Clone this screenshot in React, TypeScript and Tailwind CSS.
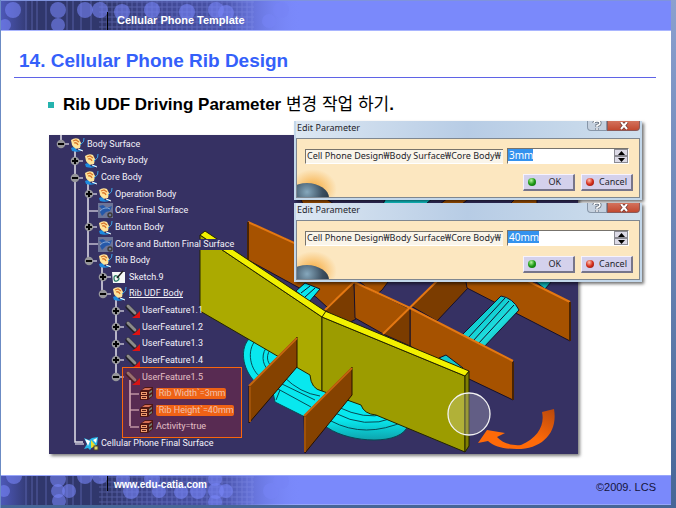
import { type ReactNode } from "react";

interface TreeItem {
  label: string;
  level: number;
  icon: "body" | "surface" | "sketch" | "feature" | "param" | "final";
  toggle?: "plus" | "minus";
  selected?: boolean;
  underline?: boolean;
}

const TREE: TreeItem[] = [
  { label: "Body Surface", level: 0, icon: "body", toggle: "minus" },
  { label: "Cavity Body", level: 1, icon: "body", toggle: "plus" },
  { label: "Core Body", level: 1, icon: "body", toggle: "minus" },
  { label: "Operation Body", level: 2, icon: "body", toggle: "plus" },
  { label: "Core Final Surface", level: 2, icon: "surface" },
  { label: "Button Body", level: 2, icon: "body", toggle: "plus" },
  { label: "Core and Button Final Surface", level: 2, icon: "surface" },
  { label: "Rib Body", level: 2, icon: "body", toggle: "minus" },
  { label: "Sketch.9", level: 3, icon: "sketch", toggle: "plus" },
  { label: "Rib UDF Body", level: 3, icon: "body", toggle: "minus", underline: true },
  { label: "UserFeature1.1", level: 4, icon: "feature", toggle: "plus" },
  { label: "UserFeature1.2", level: 4, icon: "feature", toggle: "plus" },
  { label: "UserFeature1.3", level: 4, icon: "feature", toggle: "plus" },
  { label: "UserFeature1.4", level: 4, icon: "feature", toggle: "plus" },
  { label: "UserFeature1.5", level: 4, icon: "feature", toggle: "minus" },
  { label: "`Rib Width`=3mm", level: 5, icon: "param", selected: true },
  { label: "`Rib Height`=40mm", level: 5, icon: "param", selected: true },
  { label: "Activity=true", level: 5, icon: "param" },
  { label: "Cellular Phone Final Surface", level: 1, icon: "final" },
];

const INDENT = ["pl-[7px]", "pl-[21px]", "pl-[35px]", "pl-[49px]", "pl-[62px]", "pl-[76px]"];

function TreeIcon({ icon }: { icon: TreeItem["icon"] }) {
  return (
    <svg viewBox="0 0 15 15" className="size-[15px] shrink-0">
      {icon === "body" && (
        <>
          <path d="M1 3 Q5 0 9 2 L11 6 10 11 5 12 2 8Z" fill="#ffe49a" />
          <path d="M3 4 L6 3 9 5 M4 6 Q7 5 8 8" stroke="#d9772c" strokeWidth="1.3" fill="none" />
          <path d="M1 11 Q4 9 6 12 Q8 15 10 12 L13 13 Q8 16 2 14Z" fill="#1d8be0" />
          <path d="M8 12 L13 14" stroke="#fff" strokeWidth="1" />
          <path d="M14 1 Q15 5 10 8" stroke="#3aa5e8" strokeWidth="1" fill="none" />
        </>
      )}
      {icon === "surface" && (
        <>
          <rect width="15" height="15" fill="#6d7597" />
          <path d="M1 3 L5 2 9 5 14 3 12 8 8 9 4 13 2 9 4 6Z" fill="#2558a8" />
          <path d="M2 8 Q7 3 12 6" stroke="#84a8d8" fill="none" />
          <circle cx="12" cy="12" r="2" fill="none" stroke="#3c3a36" strokeWidth="1.4" />
        </>
      )}
      {icon === "sketch" && (
        <>
          <path d="M0 2 H13 V13 H1Z" fill="#f4f8f6" />
          <path d="M2 8 Q2 5 5 6 Q9 9 5 11 Q2 12 2 8" fill="none" stroke="#247a60" strokeWidth="1.3" />
          <path d="M5 8 L11 1" stroke="#222" strokeWidth="1.5" />
        </>
      )}
      {icon === "feature" && (
        <>
          <path d="M3 4 L10 11" stroke="#23222a" strokeWidth="5" strokeLinecap="round" />
          <path d="M3 3 L10 10" stroke="#8c8b8a" strokeWidth="3" strokeLinecap="round" />
          <path d="M15 8 V15 H7 L11 12Z" fill="#e01212" />
        </>
      )}
      {icon === "param" && (
        <>
          <path d="M1 5 L6 1 H14 V10 L9 14 H1Z" fill="#2a1710" />
          <path d="M3 4 L6 2 H13 L10 4Z" fill="#dc8a64" />
          <path d="M2 6 H8 V9 H2Z M2 10 H8 V13 H2Z" fill="#ffc888" />
          <path d="M3 7.5 H7 M3 11.5 H7" stroke="#35190e" />
          <path d="M10 6 L13 4 V6 L10 8Z M10 10 L13 8 V10 L10 12Z" fill="#58a08c" />
        </>
      )}
      {icon === "final" && (
        <>
          <path d="M0 2 L5 4 8 2 14 1 13 9 9 10 6 14 4 12 0 13 3 8Z" fill="#28b6e8" />
          <path d="M1 3 L6 5 4 10Z M9 4 L13 2 12 7Z" fill="#fff" />
          <path d="M7 4 L12 10 7 12Z" fill="#e8df2b" />
          <rect x="10" y="10" width="4" height="4" fill="#ddd56a" stroke="#443" />
        </>
      )}
    </svg>
  );
}

function TreeToggle({ kind }: { kind?: "plus" | "minus" }) {
  return (
    <svg viewBox="0 0 14 10" className="h-2.5 w-3.5 shrink-0">
      <path d={kind ? "M9 5 H13" : "M5 5 H14"} stroke="#d5d3df" strokeWidth="1.3" />
      {kind && <circle cx="5" cy="5" r="4.3" fill="#96969a" />}
      {kind && <path d="M2 5 H8" stroke="#050505" strokeWidth="2" />}
      {kind === "plus" && <path d="M5 2 V8" stroke="#050505" strokeWidth="2" />}
    </svg>
  );
}

function SpecTree() {
  return (
    <ul className="relative flex h-full flex-col pt-px pb-0.5 text-[9px] leading-[11px] text-[#f4f2fa]">
      {TREE.map((item) => (
        <li key={item.label} className={`flex flex-1 items-center ${INDENT[item.level]}`}>
          <TreeToggle kind={item.toggle} />
          <TreeIcon icon={item.icon} />
          <span
            className={`ml-0.5 whitespace-nowrap ${
              item.selected ? "rounded-xs bg-[#ff7a12] text-[#fff6dc]" : item.level < 4 ? "bg-[#363163]" : ""
            } ${item.underline ? "underline" : ""}`}
          >
            {item.label}
          </span>
        </li>
      ))}
    </ul>
  );
}

// Wireframe lines of the tree share the scene's coordinate system
function Scene() {
  return (
    <svg viewBox="49 135 529 319" className="absolute inset-0 size-full" aria-hidden="true">
      <defs>
        <linearGradient id="arrow" x1="0" y1="1" x2="1" y2="0">
          <stop offset="0.5" stopColor="#ff6a08" />
          <stop offset="1" stopColor="#b8480c" />
        </linearGradient>
        <linearGradient id="pipe" x1="0" y1="0" x2="0" y2="1">
          <stop offset="0.8" stopColor="#08e8ee" />
          <stop offset="1" stopColor="#0fa3ac" />
        </linearGradient>
        <linearGradient id="strap" x1="0" y1="0" x2="1" y2="1">
          <stop offset="0.4" stopColor="#10cdd2" />
          <stop offset="0.6" stopColor="#1fdede" />
          <stop offset="1" stopColor="#07858c" />
        </linearGradient>
      </defs>
      <rect x="49" y="135" width="529" height="319" fill="#363163" />
      <g stroke="#15102b" strokeWidth="1" strokeLinejoin="round">
        {/* rear ribs */}
        <path d="M383 204 L386 198 H433 L426 204Z" fill="#12d8dc" />
        <path d="M303 204 L300 198 H325 L334 204Z M440 204 L448 198 H470 L462 204Z M510 204 L516 198 H537 V204Z" fill="#a85400" />
        <path d="M248 222 L365 274 354 283 327 307 316 297 248 260Z" fill="#a65200" />
        <path d="M355 278 H391 L382 290 376 295Z" fill="#a65200" />
        <path d="M325 310 L354 282 356 319 345 325Z" fill="#7b3c00" />
        <path d="M354 282 L410 309 385 335 355 318Z" fill="#a65200" />
        <path d="M411 306 L437 281 H467 L468 288 437 321Z" fill="#7b3c00" />
        <path d="M465 276 H520 L570 302 V341 L467 288Z" fill="#a65200" />
        <path d="M535 281 H552 L545 289Z" fill="#0fb4b8" />
        <path d="M501 296 Q513 298 519 310 L483 348 460 337Z" fill="url(#strap)" />
        <path d="M505 298 L468 338 M509 301 L473 341 M514 305 L478 344" fill="none" />
        <path d="M410 308 L513 361 V400 L469 379 410 346Z" fill="#a65200" />
        <path d="M383 334 L410 308 V346Z" fill="#7b3c00" />
        <path d="M439 358 L446 355 463 368 455 370Z" fill="#12c8cc" />
        <path d="M296 291 L305 283 320 289 309 302Z" fill="#08e8ee" />
        <path d="M301 293 L310 286 M305 297 L315 288" fill="none" />
      </g>
      <g fill="none" stroke="#e47812" strokeWidth="2">
        <path d="M248 222 L345 266" />
        <path d="M325 310 L354 282 L410 308 L513 361" />
        <path d="M383 334 L437 281" />
        <path d="M520 277 L570 302" />
      </g>
      <path d="M570 302 V341 M513 362 V400 M248 222 V262" stroke="#4b2400" strokeWidth="2" />

      {/* phone shell */}
      <g stroke="#064a55" strokeWidth="1">
        <path d="M250 338 C240 347 241 368 256 383 L273 392 275 402 303 416 328 428 C350 443 402 446 408 425 L395 405 300 350Z" fill="url(#pipe)" />
        <path d="M256 340 C246 350 250 371 262 378 M266 348 C260 357 264 368 270 371 M270 350 C265 357 268 365 274 368" fill="none" />
        <path d="M273 392 L278 389 311 407 M276 400 L280 390 M284 377 Q300 393 320 396 M280 383 L315 400 M331 421 Q365 439 405 421 M335 413 Q365 429 393 418 M338 407 Q365 420 385 414" fill="none" />
      </g>

      {/* driven rib */}
      <g stroke="#242400" strokeWidth="1" strokeLinejoin="round">
        <path d="M200 235 L322 317 V391 Q311 389 310 375 L200 311Z" fill="#abaa00" />
        <path d="M322 317 L465 376 V452 L376 415 Q364 414 361 405 L322 391Z" fill="#9c9c00" />
        <path d="M465 376 L469 371 V446 L465 452Z" fill="#7e7e00" />
        <path d="M200 235 L205 231 325 311 469 371 465 376 322 317Z" fill="#f2f100" />
        <path d="M322 317 L326 311" />
      </g>

      {/* front cross ribs */}
      <g stroke="#241000" strokeLinejoin="round">
        <path d="M249 386 L297 337 V367 L249 423Z" fill="#854200" />
        <path d="M304 416 L352 367 V395 L305 453Z" fill="#854200" />
      </g>
      <path d="M249 386 L297 338 M304 416 L352 368" stroke="#c4660f" strokeWidth="2" />
      <path d="M250 387 V422 M305 417 V452" stroke="#a05208" strokeWidth="2" />

      <path d="M61 135 V142 M75 149 V442 H83 M88 182 V259 M102 266 V292 M116 299 V375 M130 380 V426" stroke="#e3e1ea" strokeWidth="1.5" fill="none" />
      <circle cx="469" cy="414" r="21" fill="#ffffff" fillOpacity="0.22" stroke="#f3f3f3" strokeWidth="1.3" />
      <path
        d="M542 412 L554 409 C558 432 543 449 517 449 C504 449 495 447 488 441 L478 443 L487 430 L505 433 L497 437 C503 444 514 446 521 445 C538 438 545 425 542 412Z"
        fill="url(#arrow)"
      />
    </svg>
  );
}

function DialogButton({ children, color }: { children: ReactNode; color: "green" | "red" }) {
  return (
    <button
      type="button"
      className="flex h-[17px] w-[52px] items-center justify-between border border-[#f6f3ff] border-r-2 border-b-2 border-r-[#77758a] border-b-[#77758a] bg-[#d4d1ec] pr-1 pl-1 leading-3"
    >
      <span
        className={`size-2 shrink-0 rounded-full ${
          color === "green"
            ? "bg-radial-[at_40%_30%] from-[#b6f5a0] via-[#1e9a16] to-[#075c08]"
            : "bg-radial-[at_40%_30%] from-[#ffc4b4] via-[#d5301d] to-[#7c0d08]"
        }`}
      />
      <span className={color === "green" ? "pr-2" : ""}>{children}</span>
    </button>
  );
}

function EditParameterDialog({ id, value, inputWidth }: { id: string; value: string; inputWidth: string }) {
  return (
    <div
      role="dialog"
      aria-labelledby={`${id}-title`}
      className="flex h-[79px] w-[348px] flex-col border-2 border-t-0 border-[#c3d7ea] bg-[#c3d7ea] font-['Noto_Sans','Noto_Sans_CJK_KR',sans-serif] text-[9px] text-[#25252b] shadow-[2px_2px_3px_#0000008c]"
    >
      <div className="flex h-[17px] items-start justify-between bg-linear-to-r from-[#dce7f2] via-[#b7cce5] to-[#cfdfed]">
        <h3 id={`${id}-title`} className="pl-px leading-[14px]">
          Edit Parameter
        </h3>
        <div className="flex">
          <button type="button" aria-label="Help" className="flex h-2.5 w-5 items-center justify-center rounded-bl border border-t-0 border-[#8796a8] bg-[#c5d1df]">
            <svg viewBox="0 0 10 9" className="h-[9px] w-2.5">
              <path d="M2 2 Q2 0 5 0 T8 2 Q8 4 5 4.5 V6 M5 7 V9" stroke="#5e6774" strokeWidth="3" fill="none" />
              <path d="M2 2 Q2 0 5 0 T8 2 Q8 4 5 4.5 V6 M5 7 V9" stroke="#fff" strokeWidth="1.5" fill="none" />
            </svg>
          </button>
          <button type="button" aria-label="Close" className="flex h-2.5 w-[33px] items-center justify-center rounded-br border border-t-0 border-[#8c5a58] bg-linear-to-b from-[#d3725c] to-[#c2492f]">
            <svg viewBox="0 0 10 8" className="h-2 w-2.5">
              <path d="M2 0 L8 7 M8 0 L2 7" stroke="#6e3b37" strokeWidth="3.5" />
              <path d="M2 0 L8 7 M8 0 L2 7" stroke="#fff" strokeWidth="2" />
            </svg>
          </button>
        </div>
      </div>
      <form className="relative flex flex-1 flex-col justify-between overflow-hidden border border-[#7f8790] bg-[#fce7c0] pt-[9px] pr-1.5 pb-1.5 pl-2">
        <div className="absolute -bottom-3 -left-2 h-10 w-12 bg-radial from-[#f6a838] to-[#fce7c000] to-70%" />
        <div className="absolute -bottom-4 -left-3 h-[30px] w-11 rounded-[50%] bg-radial-[at_50%_30%] from-[#86a8bd] via-[#3c4f60] to-[#1c2630]" />
        <div className="relative mr-1 flex items-center gap-1">
          <label
            htmlFor={id}
            className="flex h-[15px] flex-1 items-center border border-r-0 border-[#ffffff] border-t-[#77736c] border-l-[#77736c] bg-[#faf5ea] pl-px leading-3 whitespace-nowrap"
          >
            Cell Phone Design₩Body Surface₩Core Body₩
          </label>
          <div className="flex h-4 w-[122px] shrink-0 border border-white border-t-[#77736c] border-l-[#77736c] bg-white">
            <input
              id={id}
              defaultValue={value}
              className={`h-3 bg-[#3492ee] pl-px text-[10px] leading-3 text-white outline-none ${inputWidth}`}
            />
            <div className="ml-auto flex w-3.5 flex-col">
              <button type="button" aria-label="Increase" className="flex h-[7px] items-center justify-center border border-[#8a8a92] bg-[#dcdae6]">
                <svg viewBox="0 0 7 4" className="h-1 w-[7px]"><path d="M0 4 L3.5 0 L7 4Z" /></svg>
              </button>
              <button type="button" aria-label="Decrease" className="flex h-[7px] items-center justify-center border border-[#8a8a92] bg-[#dcdae6]">
                <svg viewBox="0 0 7 4" className="h-1 w-[7px]"><path d="M0 0 L3.5 4 L7 0Z" /></svg>
              </button>
            </div>
          </div>
        </div>
        <div className="relative flex justify-end gap-1.5">
          <DialogButton color="green">OK</DialogButton>
          <DialogButton color="red">Cancel</DialogButton>
        </div>
      </form>
    </div>
  );
}

const TOP_DOTS = [
  [12, 9, 8], [4, 24, 6], [57, 9, 8], [57, 24, 7], [84, 9, 8], [99, 9, 8], [121, 11, 8], [151, 9, 8],
  [186, 11, 8], [215, 9, 8], [225, 12, 8], [280, 9, 8], [268, 20, 7],
];

const BOTTOM_DOTS = [
  [13, 0, 8], [3, 15, 6], [57, 3, 8], [57, 15, 7], [68, 15, 7], [58, 25, 7], [84, 0, 8], [99, 0, 8],
  [122, 3, 7], [130, 15, 8], [151, 3, 8], [158, 15, 7], [180, 16, 7], [197, 15, 8], [214, 3, 7],
  [215, 15, 8], [225, 15, 7], [214, 26, 7], [270, 15, 8], [280, 5, 8],
];

function BandPattern({ id, dots }: { id: string; dots: number[][] }) {
  return (
    <svg viewBox="0 0 300 29" className="absolute top-0 left-0 h-[29px] w-[300px]" aria-hidden="true">
      <defs>
        <linearGradient id={`${id}-fade`}>
          <stop offset="0" stopColor="#4d58b8" />
          <stop offset="0.1" stopColor="#30376c" />
          <stop offset="0.35" stopColor="#30376c" />
          <stop offset="0.5" stopColor="#3e4690" />
          <stop offset="0.75" stopColor="#4a54ab" />
          <stop offset="1" stopColor="#7a89fb" stopOpacity="0" />
        </linearGradient>
        <pattern id={`${id}-grid`} width="5" height="5" patternUnits="userSpaceOnUse">
          <path d="M0 1 H5 M1 0 V5" stroke="#8d99f0" strokeWidth="1" opacity="0.35" />
        </pattern>
      </defs>
      <rect width="300" height="30" fill={`url(#${id}-fade)`} />
      <rect x="98" width="155" height="30" fill={`url(#${id}-grid)`} />
      <path d="M25 0 V30 M31 0 V30 M36 0 V30 M45 0 V30 M66 0 V30 M72 0 V30 M80 0 V30 M90 0 V30" stroke="#7985dd" opacity="0.5" />
      {dots.map(([cx, cy, r]) => (
        <circle key={`${cx}-${cy}`} cx={cx} cy={cy} r={r} fill="#7683f5" opacity="0.6" />
      ))}
    </svg>
  );
}

export default function App() {
  return (
    <div className="flex min-h-screen flex-col border-l border-[#6b8bc4] bg-linear-to-b from-[#8ba0cf] to-[#466697] pr-[5px] font-['Liberation_Sans','Noto_Sans_CJK_KR',sans-serif]">
      <header className="relative flex h-[31px] items-end border-y border-[#a9b5ff] border-t-[#7f93dc] bg-[#7a89fb]">
        <BandPattern id="top" dots={TOP_DOTS} />
        <div className="relative ml-[106px] h-[18px] border-l border-black pl-[9px] text-[11px] leading-[16px] font-bold text-white">
          Cellular Phone Template
        </div>
      </header>

      <main className="flex-1 bg-white pb-5">
        <h1 className="mr-[15px] ml-[13px] flex h-[47px] items-end border-b border-b-[#5f63e6] pb-[3px] pl-[5px] text-[19px] leading-[26px] font-bold text-[#3460fa]">
          14. Cellular Phone Rib Design
        </h1>
        <h2 className="flex h-[57px] items-center pb-1 pl-[47px] text-[17px] font-bold text-black">
          <span className="mr-[9px] size-1.5 bg-[#25b3ae]" />
          <span>
            Rib UDF Driving Parameter <span className="font-normal">변경 작업 하기</span>.
          </span>
        </h2>
        <figure className="relative ml-12 h-[319px] w-[529px] font-[Roboto,'Noto_Sans_CJK_KR',sans-serif] shadow-[2px_2px_3px_#00000080]">
          <Scene />
          <SpecTree />
          <div className="absolute top-[232px] left-[73px] h-[71px] w-[120px] border border-[#f9660c] bg-[#c01c20]/25" />
          <div className="absolute -top-3.5 left-[245px] flex flex-col gap-[3px]">
            <EditParameterDialog id="rib-width" value="3mm" inputWidth="w-[25px]" />
            <EditParameterDialog id="rib-height" value="40mm" inputWidth="w-[31px]" />
          </div>
        </figure>
      </main>

      <footer className="relative mb-[3px] flex h-[30px] items-start justify-between border-y border-[#98a6fb] bg-[#7a89fb]">
        <BandPattern id="bottom" dots={BOTTOM_DOTS} />
        <div className="relative ml-[106px] h-[15px] border-l border-black pl-1.5">
          <a href="http://www.edu-catia.com" className="block text-[10px] leading-[17px] font-bold text-white">
            www.edu-catia.com
          </a>
        </div>
        <p className="relative pt-[5px] pr-[15px] text-[11px] leading-3 text-[#14143c]">©2009. LCS</p>
      </footer>
    </div>
  );
}
